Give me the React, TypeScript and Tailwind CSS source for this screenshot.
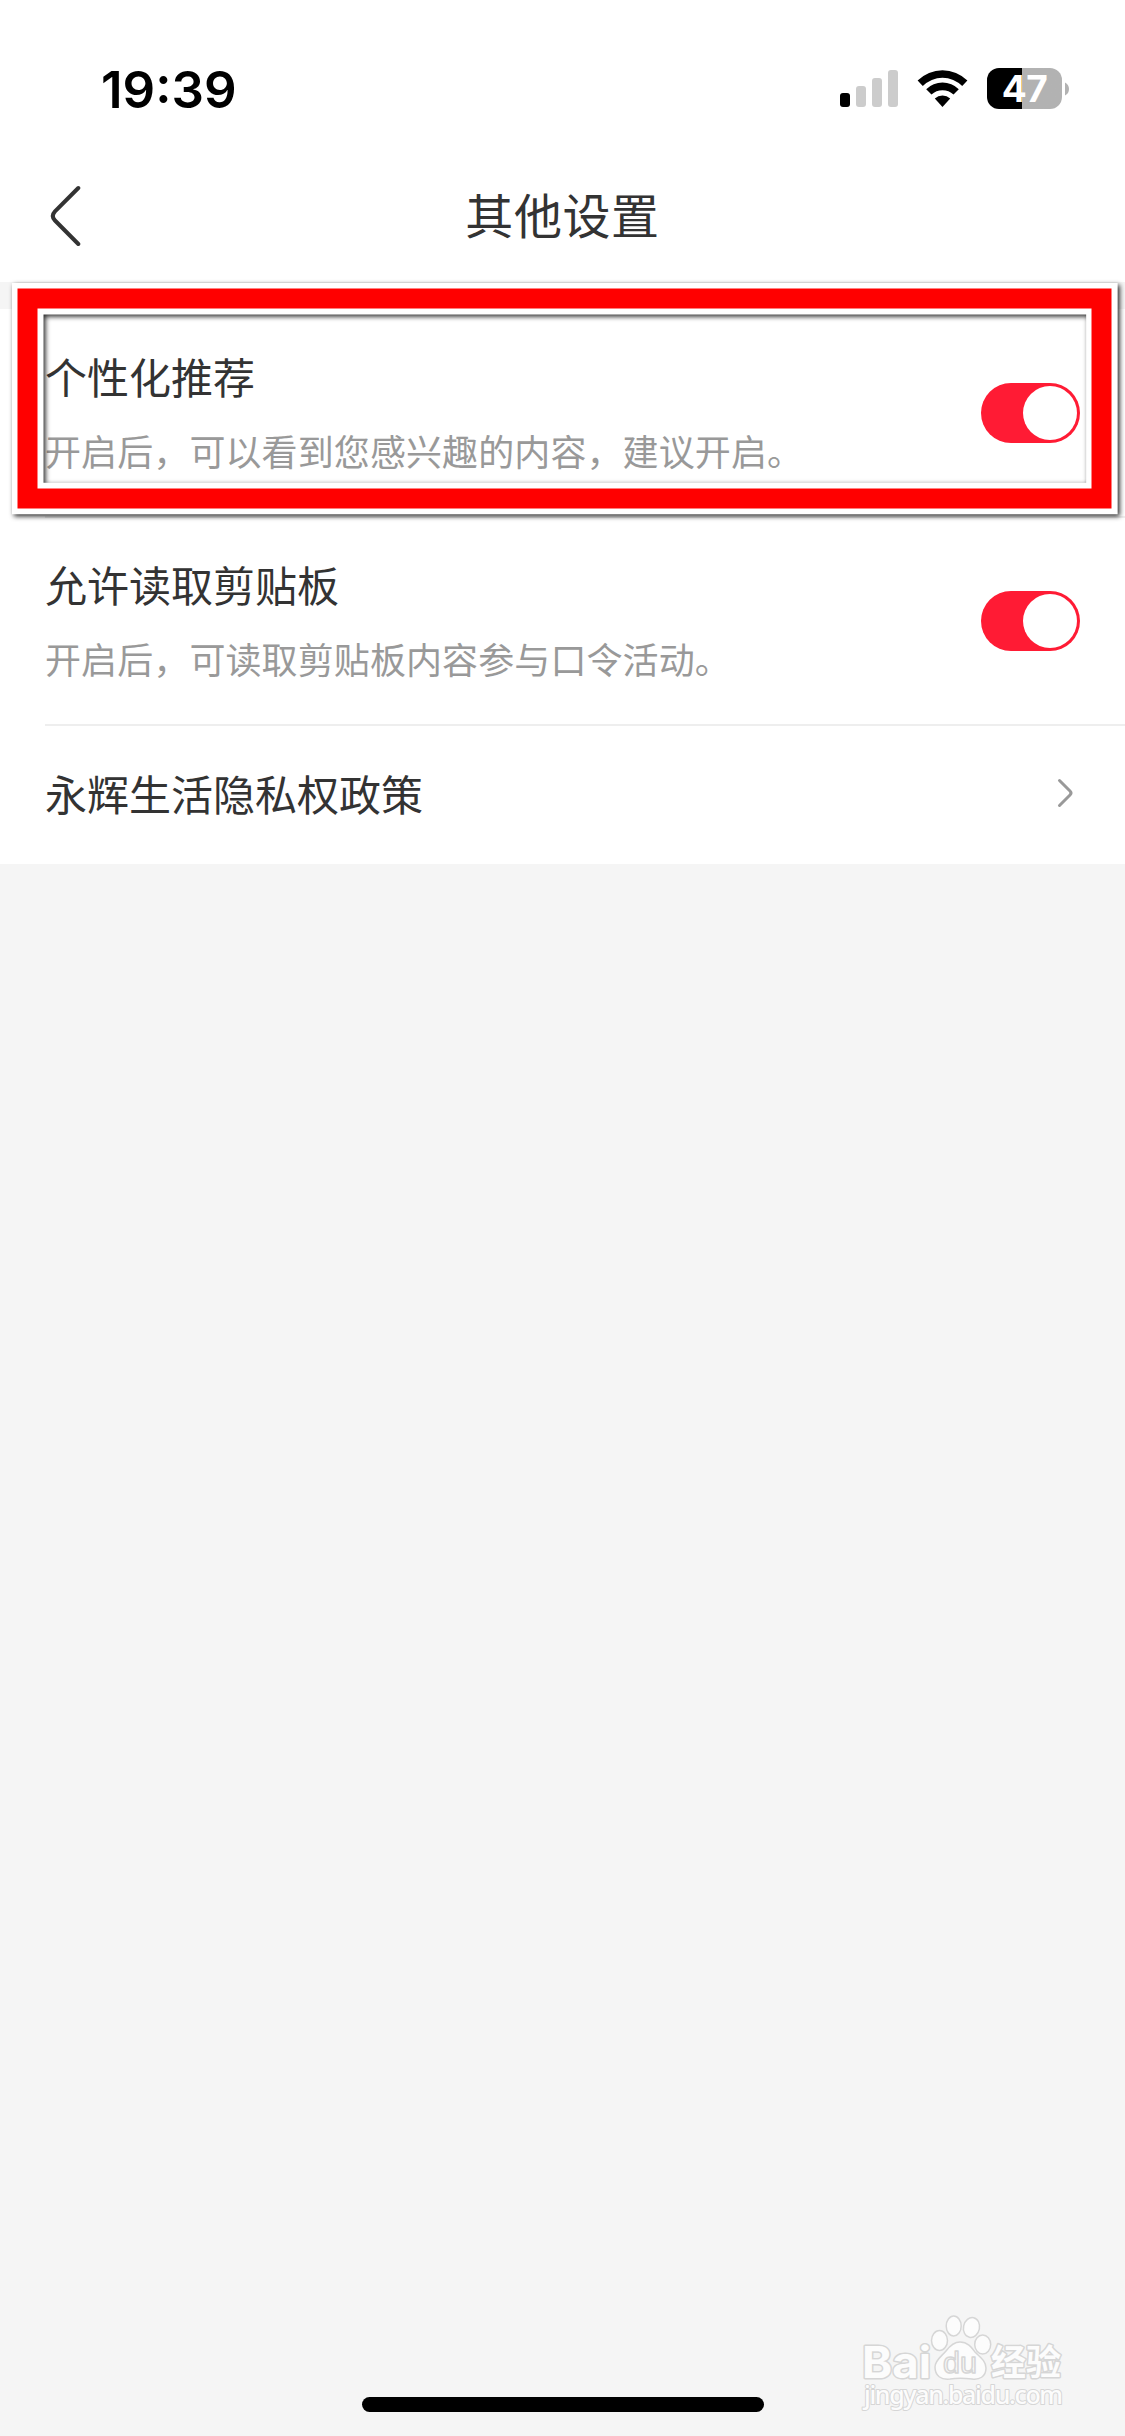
import React from 'react'

interface SettingItem {
  id: string
  title: string
  description: string
  enabled: boolean
}

const settings: SettingItem[] = [
  {
    id: 'recommend',
    title: '个性化推荐',
    description: '开启后，可以看到您感兴趣的内容，建议开启。',
    enabled: true
  },
  {
    id: 'clipboard',
    title: '允许读取剪贴板',
    description: '开启后，可读取剪贴板内容参与口令活动。',
    enabled: true
  }
]

const StatusBar: React.FC = () => (
  <div className="flex h-[150px] items-start justify-between pl-[101px] pr-14 pt-[66px]">
    <span className="font-['Inter',sans-serif] text-[51px] font-semibold leading-[47px] text-black">
      19:39
    </span>
    <div className="flex items-start pt-0.5">
      <svg width="58" height="41" viewBox="0 0 58 41">
        <rect x="0" y="25" width="10" height="14" rx="3" fill="#000" />
        <rect x="16" y="18" width="10" height="21" rx="3" fill="#ccc" />
        <rect x="32" y="10" width="10" height="29" rx="3" fill="#ccc" />
        <rect x="48" y="2" width="10" height="37" rx="3" fill="#ccc" />
      </svg>
      <svg className="ml-[19px]" width="51" height="41" viewBox="0 0 51 41">
        <path d="M0.6 12.6A35.4 35.4 0 0 1 50.4 12.6L45.2 18A27.6 27.6 0 0 0 5.8 18Z" />
        <path d="M9.2 21.2A23.4 23.4 0 0 1 41.8 21.2L36.5 26.6A15.8 15.8 0 0 0 14.5 26.6Z" />
        <path d="M17.8 30.6A11.2 11.2 0 0 1 33.2 30.6L25.5 39Z" />
      </svg>
      <div className="ml-[19px] flex items-center">
        <div className="flex h-[41px] w-[75px] items-center justify-center rounded-[12px] bg-linear-to-r from-black from-[35px] to-[#b2b2b2] to-[35px]">
          <span className="font-['Inter',sans-serif] text-[37px] font-bold leading-none tracking-[-0.5px] text-white">47</span>
        </div>
        <svg className="ml-[3px]" width="4" height="14" viewBox="0 0 4 14">
          <path d="M0 0.5Q4 2.5 4 7T0 13.5Z" fill="#b2b2b2" />
        </svg>
      </div>
    </div>
  </div>
)

const NavBar: React.FC = () => (
  <div className="grid h-[132px] grid-cols-[120px_1fr_120px] items-center">
    <svg className="ml-12" width="36" height="64" viewBox="0 0 36 64">
      <path d="M30.3 4L7 27.3Q2.6 32 7 36.5L30.3 60" fill="none" stroke="#333" strokeWidth="4" strokeLinecap="round" />
    </svg>
    <h1 className="pb-1.5 text-center text-[48px] leading-[64px] tracking-[0.6px] text-[#333]">其他设置</h1>
  </div>
)

const Toggle: React.FC<{ enabled: boolean }> = ({ enabled }) => (
  <div
    className={`flex h-[60px] w-[99px] shrink-0 rounded-full p-[3px] ${
      enabled ? 'justify-end bg-[#ff1b34]' : 'justify-start bg-[#e5e5e5]'
    }`}
  >
    <div className="size-[54px] rounded-full bg-white" />
  </div>
)

const SettingRow: React.FC<{ item: SettingItem }> = ({ item }) => (
  <div className="flex h-[208px] items-center justify-between border-b-2 border-[#eee] pr-[45px]">
    <div className="pb-[3px]">
      <p className="text-[42px] leading-[60px] text-[#333]">{item.title}</p>
      <p className="mt-4 text-[36px] leading-[56px] tracking-[0.1px] text-[#999]">{item.description}</p>
    </div>
    <Toggle enabled={item.enabled} />
  </div>
)

// red frame laid over the first setting
const HighlightFrame: React.FC = () => (
  <svg
    className="pointer-events-none absolute left-0 top-[270px] drop-shadow-[2px_2px_2.5px_rgba(0,0,0,0.85)]"
    width="1125"
    height="260"
    viewBox="0 270 1125 260"
    fill="none"
  >
    <rect x="27.75" y="298.75" width="1074.15" height="199.75" stroke="#fff" strokeWidth="31.5" />
    <rect x="27.5" y="298.5" width="1074" height="200" stroke="#f00" strokeWidth="20" />
  </svg>
)

const Watermark: React.FC = () => (
  <svg
    className="absolute left-[856px] top-[2308px]"
    width="216"
    height="108"
    viewBox="856 2308 216 108"
    fill="#fcfcfc"
    stroke="#d6d6d6"
    strokeWidth="3"
    strokeLinejoin="round"
  >
    <g style={{ paintOrder: 'stroke' }}>
      <text x="862" y="2378" textLength="69" lengthAdjust="spacingAndGlyphs" className="font-['Inter',sans-serif] text-[44px] font-bold">Bai</text>
      <text x="991" y="2375" textLength="70" className="font-['Noto_Sans_CJK_SC',sans-serif] text-[35px] font-bold">经验</text>
      <text x="864" y="2404" textLength="199" strokeWidth="2" className="font-['Noto_Sans',sans-serif] text-[25px] font-medium">jingyan.baidu.com</text>
    </g>
    <g strokeWidth="1.5">
      <ellipse cx="939.5" cy="2340.5" rx="8" ry="10" />
      <ellipse cx="953.7" cy="2326" rx="7.5" ry="10" />
      <ellipse cx="971.5" cy="2327.5" rx="8" ry="10" transform="rotate(12 971.5 2327.5)" />
      <ellipse cx="982.7" cy="2344.5" rx="8" ry="9.5" />
      <path d="M960 2342C968 2342 972 2348 975 2352C980 2357 986 2361 986 2368C986 2377 979 2380 972 2379C964 2378 956 2378 950 2379C941 2380 935 2376 935 2367C935 2360 942 2356 946 2351C949 2347 953 2342 960 2342Z" />
      <text x="943" y="2373" textLength="34" lengthAdjust="spacingAndGlyphs" className="font-['Liberation_Sans',sans-serif] text-[29px]">du</text>
    </g>
  </svg>
)

const App: React.FC = () => {
  return (
    <div className="relative flex h-[2436px] w-[1125px] flex-col overflow-hidden bg-[#f5f5f5] font-['Noto_Sans_CJK_SC',sans-serif]">
      <header className="bg-white">
        <StatusBar />
        <NavBar />
      </header>

      <main className="mt-[27px] bg-white pl-[45px] pt-px">
        {settings.map((item) => (
          <SettingRow key={item.id} item={item} />
        ))}
        <div className="flex h-[138px] items-center justify-between pr-[50px]">
          <p className="pb-1 text-[42px] leading-[60px] text-[#333]">永辉生活隐私权政策</p>
          <svg className="mb-1" width="20" height="32" viewBox="0 0 20 32">
            <path d="M4.5 3.5L15 14Q17 16 15 18L4.5 28.5" fill="none" stroke="#999" strokeWidth="3" strokeLinecap="round" />
          </svg>
        </div>
      </main>

      <footer className="mt-auto flex justify-center pb-6">
        <div className="h-[15px] w-[402px] rounded-full bg-black" />
      </footer>

      <HighlightFrame />
      <Watermark />
    </div>
  )
}

export default App
